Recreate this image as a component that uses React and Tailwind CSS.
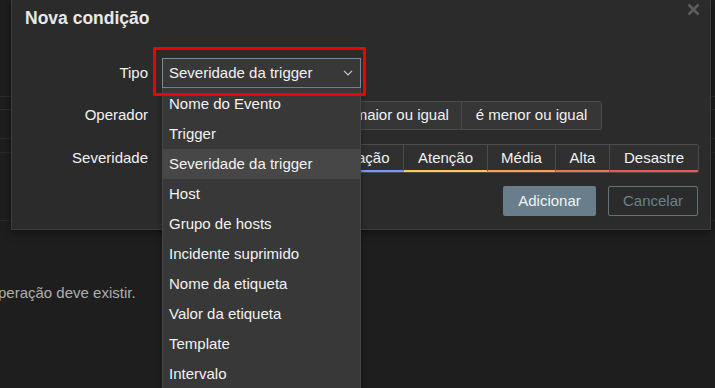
import React from 'react';

const tipos = [
  'Nome do Evento',
  'Trigger',
  'Severidade da trigger',
  'Host',
  'Grupo de hosts',
  'Incidente suprimido',
  'Nome da etiqueta',
  'Valor da etiqueta',
  'Template',
  'Intervalo',
];

const operadores = [
  { label: 'é igual', w: 'w-[70px]' },
  { label: 'não é igual', w: 'w-[96px]' },
  { label: 'é maior ou igual', w: 'w-[132px]' },
  { label: 'é menor ou igual', w: 'w-[140px]' },
];

const severidades = [
  { label: 'Não classificado', w: 'w-[137px]', line: 'border-b-[#97aab3]' },
  { label: 'Informação', w: 'w-[103px]', line: 'border-b-[#7499ff]' },
  { label: 'Atenção', w: 'w-[84px]', line: 'border-b-[#ffc859]' },
  { label: 'Média', w: 'w-[68px]', line: 'border-b-[#ffa059]' },
  { label: 'Alta', w: 'w-[54px]', line: 'border-b-[#e97659]' },
  { label: 'Desastre', w: 'w-[89px]', line: 'border-b-[#e45959]' },
];

const Row = ({ label, children, className = '' }) => (
  <div className={`flex items-center ${className}`}>
    <div className="w-[137px] shrink-0 pr-[1px] text-right text-[15px] text-[#f2f2f2]">{label}</div>
    <div className="ml-[13px] flex">{children}</div>
  </div>
);

export default function App() {
  return (
    <div className="relative h-[388px] w-[715px] overflow-hidden bg-[#1e1e1e] font-['Liberation_Sans',Arial,sans-serif]">
      {/* page behind the dialog */}
      <div className="flex flex-col">
        <div className="h-[96px]" />
        <div className="h-[13px] border-t border-[#2d2d2d]" />
        <div className="h-[29px] border-t border-[#2d2d2d]" />
        <div className="h-[14px] border-t border-[#2a2a2a]" />
        <div className="h-[68px] border-t border-[#2a2a2a]" />
        <div className="h-[64px] border-t border-[#2a2a2a]" />
        <div className="-ml-[2px] text-[15px] leading-[17px] text-[#aeaeae]">peração deve existir.</div>
      </div>

      {/* dialog */}
      <div className="absolute left-[11px] top-[-1px] h-[231px] w-[700px] border border-[#3c3c3c] bg-[#2b2b2b] shadow-[0_2px_8px_rgba(0,0,0,0.5)]">
        <button className="absolute right-[10px] top-[3px] text-[#5c5c5c]">
          <svg width="13" height="13" viewBox="0 0 13 13">
            <path d="M1.5 1.5 L11.5 11.5 M11.5 1.5 L1.5 11.5" stroke="currentColor" strokeWidth="2.5" />
          </svg>
        </button>

        <div className="flex h-[37px] items-center pl-[13px] text-[17.5px] font-bold text-[#e8e8e8]">
          Nova condição
        </div>

        <Row label="Tipo" className="mt-[21px] h-[30px]">
          <div className="flex h-[30px] w-[199px] items-center justify-between border border-[#768d99] bg-[#383838] pl-[6px] pr-[7px] text-[15px] text-[#f2f2f2]">
            <span>Severidade da trigger</span>
            <svg width="10" height="6" viewBox="0 0 10 6" className="text-[#c8c8c8]">
              <path d="M1 0.8 L5 4.8 L9 0.8" fill="none" stroke="currentColor" strokeWidth="1.2" />
            </svg>
          </div>
        </Row>

        <Row label="Operador" className="mt-[13px] h-[29px]">
          <div className="flex h-[29px] overflow-hidden rounded-[2px] border border-[#4b4b4b]">
            {operadores.map((op, i) => (
              <div
                key={op.label}
                className={`flex items-center justify-center bg-[#363636] text-[15px] text-[#f2f2f2] ${op.w} ${i > 0 ? 'border-l border-[#4b4b4b]' : ''}`}
              >
                {op.label}
              </div>
            ))}
          </div>
        </Row>

        <Row label="Severidade" className="mt-[14px] h-[29px]">
          <div className="flex h-[29px] overflow-hidden rounded-[2px] border border-[#4b4b4b]">
            {severidades.map((s, i) => (
              <div
                key={s.label}
                className={`flex items-center justify-center border-b-2 bg-[#303030] pt-[2px] text-[15px] text-[#f2f2f2] ${s.w} ${s.line} ${i > 0 ? 'border-l border-l-[#4b4b4b]' : ''}`}
              >
                {s.label}
              </div>
            ))}
          </div>
        </Row>

        <div className="mt-[13px] flex justify-end gap-[12px] pr-[12px]">
          <button className="h-[30px] w-[93px] rounded-[2px] bg-[#687f8b] text-[15px] text-[#f2f2f2]">Adicionar</button>
          <button className="h-[30px] w-[90px] rounded-[2px] border border-[#5e7580] text-[15px] text-[#6a818d]">Cancelar</button>
        </div>
      </div>

      {/* open dropdown list */}
      <div className="absolute left-[162px] top-[88px] h-[310px] w-[199px] border-x border-[#464646] bg-[#383838] shadow-[0_2px_6px_rgba(0,0,0,0.35)]">
        <div className="flex flex-col pt-[1px]">
          {tipos.map((t) => (
            <div
              key={t}
              className={`flex h-[30px] items-center pl-[6px] text-[15px] text-[#f2f2f2] ${t === 'Severidade da trigger' ? 'bg-[#474747]' : ''}`}
            >
              {t}
            </div>
          ))}
        </div>
      </div>

      {/* red highlight */}
      <div className="pointer-events-none absolute left-[153px] top-[47px] h-[49px] w-[213px] rounded-[1px] border-[3px] border-[#f00000]" />
    </div>
  );
}
